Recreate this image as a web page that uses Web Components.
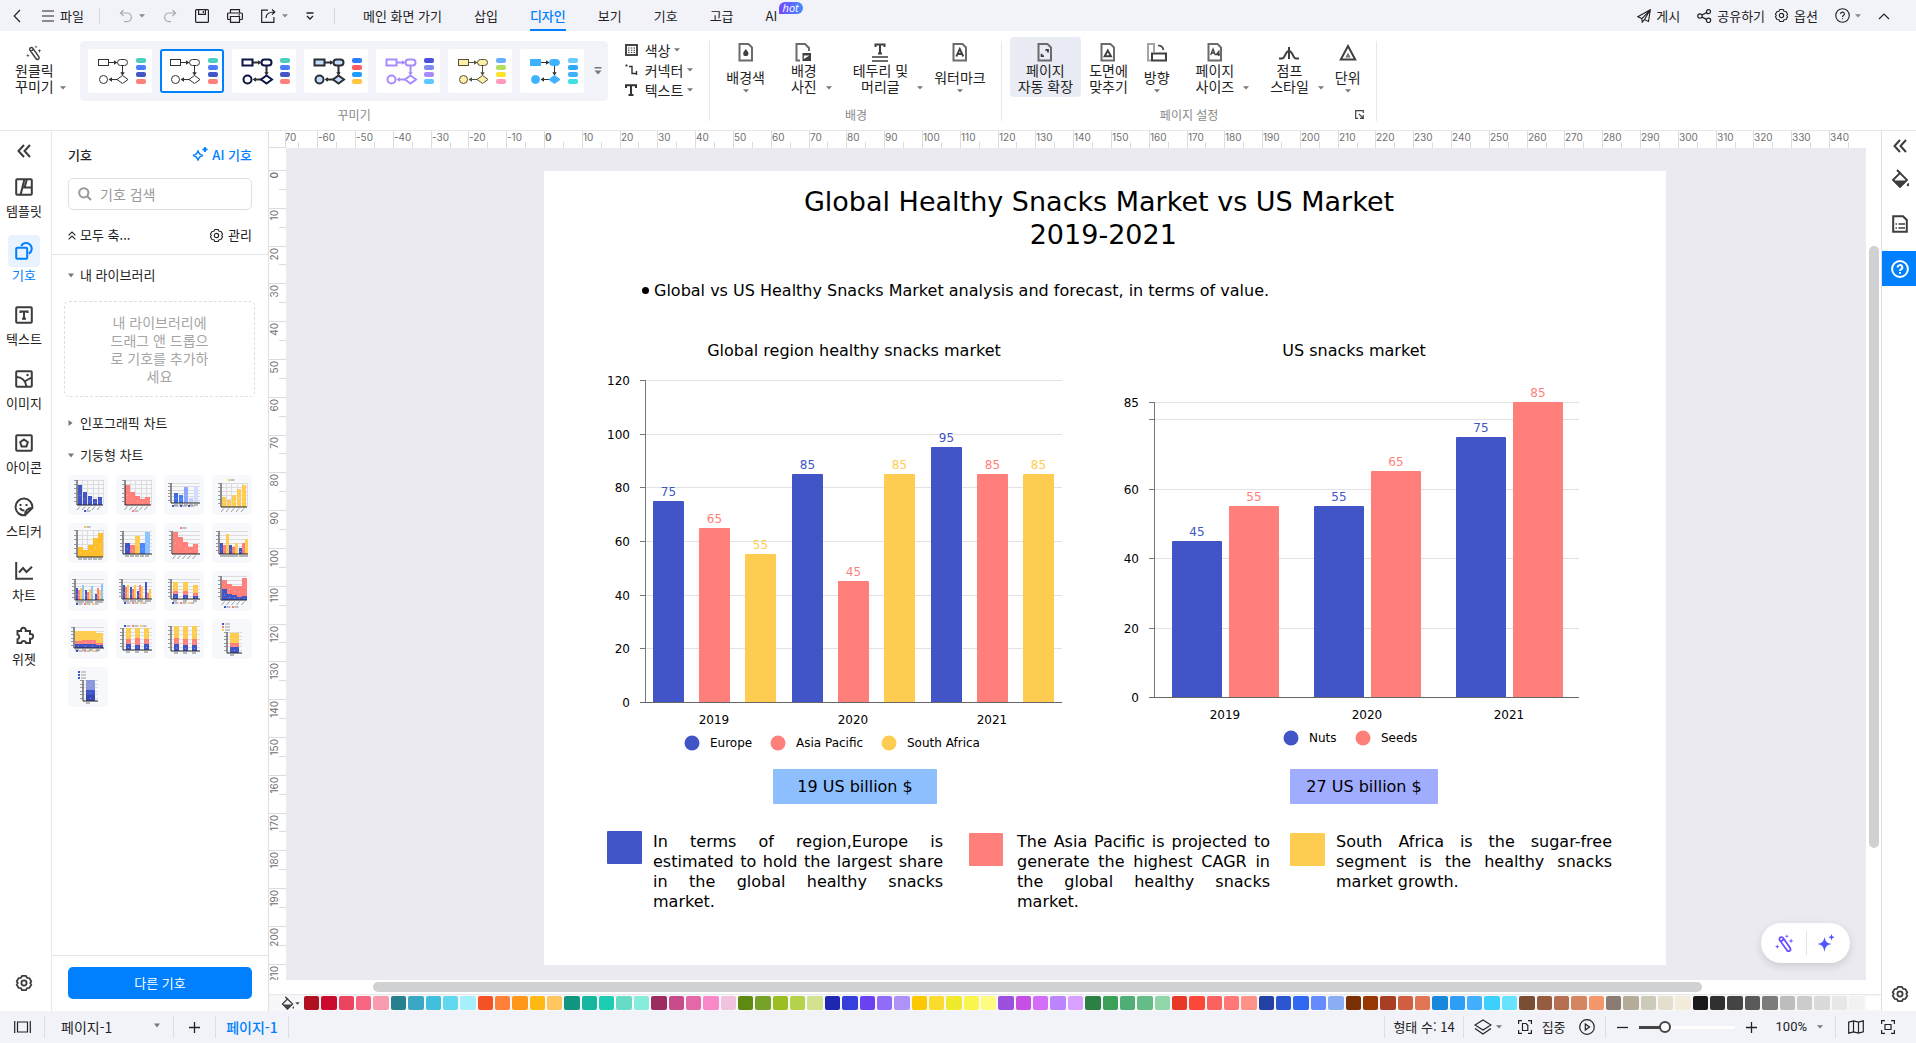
<!DOCTYPE html>
<html lang="ko">
<head>
<meta charset="utf-8">
<title>페이지-1</title>
<style>
  html, body { margin: 0; height: 100%; }
  body { font: 13px/16px "Noto Sans CJK KR", "Noto Sans", sans-serif; color: #222; background: #fff; overflow: hidden; }
</style>
</head>
<body>
<diagram-app></diagram-app>
<script>
const BLUE = '#4155c6', RED = '#ff7f7a', GOLD = '#ffcc52';

/* Registers an element whose shadow root is filled from a template. */
function define(name, css, html, setup) {
  const tpl = document.createElement('template');
  tpl.innerHTML = `<style>
    *{box-sizing:border-box}
    button,input,select{font:inherit;color:inherit;background:none;border:0;margin:0;padding:0}
    svg{display:block}
    ${css}</style>${html}`;
  customElements.define(name, class extends HTMLElement {
    connectedCallback() {
      if (this.shadowRoot) return;
      this.attachShadow({ mode: 'open' }).append(tpl.content.cloneNode(true));
      if (setup) setup(this, this.shadowRoot);
    }
  });
}

const GEAR = '<path d="M6.2 1.6h3.6l.9 1.9 2.1.2 1.7 3-1 1.3 1 1.3-1.7 3-2.1.2-.9 1.9H6.200l-.9-1.900-2.100-.2-1.700-3 1-1.300-1-1.300 1.700-3 2.100-.2z" stroke-linejoin="round"/><circle cx="8" cy="8" r="2.300"/>';
const WAND = '<path d="M4.300 2.900a1.800 1.800 0 0 1 2.600.5l6 8.500a1.700 1.700 0 0 1-2.700 2l-6-8.400a1.800 1.800 0 0 1 .1-2.600zM4.500 6.500l3-2.100"/><path d="M10 .2l.4 1.300 1.300.4-1.300.4-.4 1.300-.4-1.300-1.300-.4 1.300-.4zM13.500 3.700l.5 1.600 1.600.5-1.600.5-.5 1.600-.5-1.600-1.600-.5 1.600-.5zM1.900 8.600l.5 1.600 1.500.4-1.500.5-.5 1.500-.5-1.500-1.400-.5 1.400-.4z" fill="currentColor" stroke="none"/>';
const DOC = '<path d="M1.500 1h9l3.500 3.500V17.500h-12.500z" stroke="#6b6b6b" stroke-width="2"/>';

/* name: [view width, view height, stroke width, markup] */
const ICONS = {
  back: [8, 14, 1.200, '<path d="M7 1L1.200 7 7 13"/>'],
  menu: [12, 12, 1.200, '<path d="M0 1h12M0 6h12M0 11h12"/>'],
  undo: [14, 14, 1.200, '<path d="M4.500 1L1.500 4l3 3M1.500 4H8a4.300 4.300 0 0 1 0 8.600H5"/>'],
  redo: [14, 14, 1.200, '<path d="M9.500 1l3 3-3 3M12.500 4H6a4.300 4.300 0 0 0 0 8.600h2"/>'],
  save: [14, 14, 1.200, '<rect x=".6" y=".6" width="12.800" height="12.800" rx="1"/><path d="M3.600.6v4.800h6.800V.6M8.300 2v2"/>'],
  print: [16, 14, 1.200, '<path d="M3.500 4V.6h9V4M3.500 10.500h-2A.9.9 0 0 1 .6 9.600V5a1 1 0 0 1 1-1h12.800a1 1 0 0 1 1 1v4.600a.9.9 0 0 1-.9.900h-2M3.500 7.500h9v5.900h-9zM11.500 5.800h1.500"/>'],
  export: [15, 14, 1.200, '<path d="M7 1.200H.7v12.200h12.200V8M5 9c0-4 3-6 8.500-6M11 .5L13.800 3 11 5.600"/>'],
  more: [8, 8, 1.300, '<path d="M.5 1h7M1 4l3 3 3-3"/>'],
  up: [12, 8, 1.200, '<path d="M1 7l5-5 5 5"/>'],
  caret: [6, 4, 0, '<path d="M0 .2h6L3 3.600z" fill="currentColor"/>'],
  down: [6, 5, 0, '<path d="M0 .5h6L3 4.500z" fill="currentColor"/>'],
  right: [5, 6, 0, '<path d="M.5 0v6L4.500 3z" fill="currentColor"/>'],
  bars: [8, 8, 0, '<path d="M.5 0h7v1.500h-7zM.5 3.500h7L4 7.500z" fill="currentColor"/>'],
  send: [14, 14, 1.100, '<path d="M13.300.8L.8 7.800l4.100 1.800L13.300.8l-1.800 11.700-4.100-1.900-2.200 2.600-.3-3.600M7.400 10.600L13.300.8"/>'],
  share: [15, 14, 1.200, '<circle cx="3" cy="7" r="2.200"/><circle cx="11.500" cy="2.700" r="2"/><circle cx="11.500" cy="11.300" r="2.200"/><path d="M5 6l4.500-2.400M5 8.100l4.500 2.300"/>'],
  gear: [16, 16, 1.200, GEAR],
  gearBold: [16, 16, 1.600, GEAR],
  help: [16, 16, 1.200, '<circle cx="8" cy="8" r="7.200"/><path d="M6 6.400a2 2 0 1 1 3 1.700c-.7.4-1 .8-1 1.500M8 10.900v1.200"/>'],
  helpBold: [18, 18, 2, '<circle cx="9" cy="9" r="7.900"/><path d="M6.700 7.400a2.300 2.300 0 1 1 3.400 2c-.8.4-1.100.8-1.100 1.500M9 12v1.800"/>'],
  wand: [16, 16, 1.500, WAND],
  color: [13, 12, 1.800, '<rect x="1" y="1" width="11" height="10"/><path d="M3 4h1.500M5.800 4h1.500M8.500 4H10M3 6.200h1.500M5.800 6.200h1.500M8.500 6.200H10M3 8.400h1.500M5.800 8.400h1.500M8.500 8.400H10" stroke-width="1"/>'],
  connector: [13, 12, 1.400, '<path d="M1.500.5v2M.5 1.500h2M4 2.500h3v7h4M11.500 7v4" />'],
  textT: [12, 12, 2, '<path d="M1 4V1.200h10V4M6 1.500v9.500M3.500 11h5"/>'],
  bgColor: [16, 19, 2, DOC + '<path d="M7.800 6c1.700 2 2.600 3.300 2.600 4.500a2.600 2.600 0 0 1-5.200 0C5.200 9.300 6.100 8 7.800 6z" fill="currentColor" stroke="none"/>'],
  bgPhoto: [17, 19, 2, '<path d="M5 17.500H1.500V1H10l4 4v3" stroke="#6b6b6b"/><path d="M7.500 10h8.500v8H7.500z" fill="currentColor" stroke="none"/><path d="M9 16l5.500-3.500V16z" fill="#fff" stroke="none" transform="rotate(180 11.700 14.200)"/>'],
  header: [16, 19, 2, '<path d="M3.500 4V1.500h9V4M8 1.500v9M6 10.500h4"/><path d="M0 14h16M0 18h16" stroke="#6b6b6b" stroke-width="1.800"/>'],
  watermark: [16, 19, 1.800, DOC + '<path d="M4.300 13.500L7.800 6l3.500 7.500M5.600 11h4.500"/>'],
  autoExpand: [16, 19, 1.800, DOC + '<path d="M8.500 7H11v2.500M7 13.200H4.600v-2.500"/>'],
  fit: [16, 19, 1.900, DOC + '<path d="M7.800 7.500l3.200 5.700H4.600z"/>'],
  orient: [20, 19, 2, '<path d="M4 17.500H1V1h6v8" stroke="#a5a5a5"/><path d="M5 10.500h14v7H5z"/><path d="M11 2.500c3 0 5 1.500 5.500 4.500" stroke-width="1.700"/>'],
  size: [16, 19, 1.300, DOC + '<path d="M3.700 12l2.300-6 2.300 6M4.500 10h3M11.800 13V8.300L9.300 11.500h3.600"/>'],
  jump: [20, 14, 2, '<path d="M0 12.500h3c3.500 0 3-7.500 7-7.500s3.500 7.500 7 7.500h3M10 1v12"/>'],
  unit: [18, 17, 2, '<path d="M9 2l7.200 13.500H1.800z"/><path d="M9 8.500l2.700 5H6.300z" fill="#777" stroke="none"/>'],
  corner: [9, 9, 1.200, '<path d="M3 8.300H.7V.7h7.600V3M3.800 3.800L8 8M8.300 5v3.300H5"/>'],
  collapse: [14, 14, 2, '<path d="M7 1L1.500 7 7 13M13 1L7.500 7l5.500 6"/>'],
  template: [18, 18, 2, '<rect x="1.200" y="1.200" width="15.600" height="15.600" rx="1"/><path d="M9.500 1L5.500 17M8 9.500h9M12 1L9.600 9.500"/>'],
  symbols: [18, 18, 2, '<rect x="1.200" y="5.800" width="11" height="11" rx="1"/><path d="M6.200 4a5.600 5.600 0 1 1 7.500 7.600"/>'],
  textBox: [18, 18, 2, '<rect x="1.200" y="1.200" width="15.600" height="15.600" rx="1"/><path d="M5.500 7V5.500h7V7M9 5.500v7.500M7 12.800h4"/>'],
  image: [18, 18, 2, '<rect x="1.200" y="1.200" width="15.600" height="15.600" rx="1"/><path d="M1.500 7c5 0 9 3.500 10 9.500M9.500 11.500l7-4"/><circle cx="12.500" cy="5" r="1.200" fill="currentColor" stroke="none"/>'],
  iconBox: [18, 18, 2, '<rect x="1.200" y="1.200" width="15.600" height="15.600" rx="1"/><path d="M9 5.500l3.800 2.700-1.400 4.300H6.600L5.200 8.200z"/>'],
  sticker: [20, 20, 2, '<path d="M11 18.300A8.400 8.400 0 1 1 18.300 11c-4.500 0-7.300 2.500-7.300 7.300zM18.300 11L11 18.300M6 11c1 2 2.500 2.600 4.500 2.500"/><path d="M6.500 7v2M12.500 7v2"/>'],
  chart: [18, 18, 2, '<path d="M1.200 0v16.800H18M4 10.500L8 6l3.500 4L17 4.800"/>'],
  widget: [20, 18, 2, '<path d="M3.500 5H7a2.500 2.500 0 1 1 4.800 0H16v3a2.500 2.500 0 1 1 0 4.800V17h-4a2.400 2.400 0 0 0-4.700 0H3.500v-3.700a2.500 2.500 0 0 0 0-4.800z"/>'],
  spark: [16, 16, 1.300, '<path d="M6 3.500c.7 3.300 1.700 4.300 5 5-3.300.7-4.300 1.700-5 5-.7-3.300-1.700-4.300-5-5 3.300-.7 4.300-1.700 5-5z"/><path d="M13 0v5M10.500 2.500h5" stroke-width="1.800"/>'],
  sparkFill: [18, 18, 0, '<path d="M7.500 3c1 4.700 2.300 6 7 7-4.700 1-6 2.300-7 8-1-5.700-2.300-7-7-8 4.700-1 6-2.300 7-7zM14.500 0l.9 2.300 2.300.9-2.300.9-.9 2.300-.9-2.300-2.300-.9 2.300-.9z" fill="currentColor"/>'],
  search: [14, 14, 2, '<circle cx="5.800" cy="5.800" r="4.600"/><path d="M9.200 9.200L13 13"/>'],
  foldAll: [8, 9, 1.100, '<path d="M.6 4.300L4 1l3.400 3.300M.6 8.300L4 5l3.400 3.300"/>'],
  bucket: [18, 19, 2, '<path d="M2 11l7-7 7 7-7 7z" stroke-width="1.800"/><path d="M2 11.500h14l-7 7zM17 14a1.600 1.600 0 1 1-1.400 2.300z" fill="currentColor" stroke="none"/><path d="M6 1l3.500 3.500"/>'],
  notes: [16, 18, 2, '<path d="M1.200 1.200h9.800l3.800 3.800v11.800H1.200z"/><path d="M6.500 9H13M6.500 13H13M3.500 9H5M3.500 13H5" stroke-width="1.500"/>'],
  pages: [17, 12, 1.200, '<path d="M.7 0v12M16.300 0v12M3.500 1h10v10h-10z"/>'],
  plus: [11, 11, 1.300, '<path d="M5.500 0v11M0 5.500h11"/>'],
  minus: [11, 11, 1.300, '<path d="M0 5.500h11"/>'],
  layers: [18, 16, 1.200, '<path d="M9 1l8 5-8 5-8-5zM1 9.500l8 5.500 8-5.500"/>'],
  focus: [14, 14, 1.200, '<path d="M.6 4V.6H4M10 .6h3.400V4M13.400 10v3.400H10M4 13.400H.6V10M4.500 3.500H8L9.800 5.300v5.200H4.500z"/>'],
  play: [16, 16, 1.200, '<circle cx="8" cy="8" r="7.300"/><path d="M6.300 5l4.200 3-4.200 3z"/>'],
  map: [16, 14, 1.200, '<path d="M.7 2.200L5.500.8l5 1.400 4.800-1.400v11L10.500 13.200l-5-1.400-4.800 1.400zM5.500.8v11M10.500 2.200v11"/>'],
  fitView: [14, 14, 1.200, '<path d="M.6 4V.6H4M10 .6h3.400V4M13.400 10v3.400H10M4 13.400H.6V10M4 4.500h6v5H4z"/>']
};

define('ui-icon', ':host{display:inline-flex;flex:none}', '', (el, root) => {
  const [w, h, s, body] = ICONS[el.getAttribute('name')];
  const size = +el.getAttribute('width') || w;
  root.innerHTML += `<svg width="${size}" height="${Math.round(h * size / w)}" viewBox="0 0 ${w} ${h}" fill="none" stroke="currentColor" stroke-width="${s}" aria-hidden="true">${body}</svg>`;
});

/* ---------- top bar ---------- */
define('top-bar', `
  :host{display:flex;align-items:center;justify-content:space-between;height:31px;background:#f2f3f9;color:#222}
  div,nav{display:flex;align-items:center}
  button{display:flex;align-items:center;gap:5px;height:30px;white-space:nowrap}
  .left{padding-left:13px}
  .file{margin-left:21px;gap:6px}
  .tools{margin:0 20px 0 15px;padding:0 20px 0 19px;height:16px;border:solid #d6d7dc;border-width:0 1px;gap:18px}
  .tools button{gap:6px}
  .off{color:#a9a9ae}
  ui-icon[name=caret]{color:#888}
  nav{gap:32px;padding-left:8px}
  nav button{position:relative}
  nav button[aria-current]{color:#0080ff;font-weight:500}
  nav button[aria-current]::after{content:"";position:absolute;left:0;right:0;bottom:0;height:2px;background:#0080ff}
  .hot{position:absolute;left:13px;top:1px;padding:0 4px;border-radius:7px 7px 7px 0;background:linear-gradient(90deg,#7a45ff,#3f8cff);color:#fff;font:italic 11px/12px "Open Sans",sans-serif}
  .right{gap:9px;padding-right:26px}
  .right .wide{margin-left:8px}`,
`<div class="left">
  <button aria-label="뒤로"><ui-icon name="back"></ui-icon></button>
  <button class="file"><ui-icon name="menu"></ui-icon>파일</button>
  <div class="tools">
    <button class="off" aria-label="실행 취소"><ui-icon name="undo"></ui-icon><ui-icon name="caret"></ui-icon></button>
    <button class="off" aria-label="다시 실행"><ui-icon name="redo"></ui-icon></button>
    <button aria-label="저장"><ui-icon name="save"></ui-icon></button>
    <button aria-label="인쇄"><ui-icon name="print"></ui-icon></button>
    <button aria-label="내보내기"><ui-icon name="export"></ui-icon><ui-icon name="caret"></ui-icon></button>
    <button aria-label="더 보기"><ui-icon name="more"></ui-icon></button>
  </div>
  <nav><button>메인 화면 가기</button><button>삽입</button><button aria-current="page">디자인</button><button>보기</button><button>기호</button><button>고급</button><button>AI<span class="hot">hot</span></button></nav>
</div>
<div class="right">
  <button><ui-icon name="send"></ui-icon>게시</button>
  <button class="wide"><ui-icon name="share"></ui-icon>공유하기</button>
  <button><ui-icon name="gear" width="15"></ui-icon>옵션</button>
  <button class="wide" aria-label="도움말"><ui-icon name="help" width="15"></ui-icon><ui-icon name="caret"></ui-icon></button>
  <button class="wide" aria-label="리본 접기"><ui-icon name="up"></ui-icon></button>
</div>`);

/* ---------- ribbon ---------- */
define('ribbon-button', `
  :host{display:block;--side:8px}
  :host([side]){--side:18px}
  button{display:grid;grid-template-columns:var(--side) auto var(--side);justify-items:center;align-content:start;height:60px;padding-top:6px;border-radius:4px;font-size:14px;line-height:16px;color:#222;white-space:nowrap}
  .icon{grid-column:1/-1;display:grid;place-items:center;height:19px;color:#404040}
  .label{grid-column:2;text-align:center}
  .c{color:#777}
  :host([side]) .c{grid-column:3;align-self:end;justify-self:end;padding:0 3px 4px 0;line-height:0}
  :host([below]) .label{padding-top:7px}
  :host([below]) .c{grid-column:2;line-height:0;padding-top:2px}
  :host([on]) button{background:#eaecf5}`,
`<button><span class="icon"></span><span class="label"><slot></slot></span></button>`, (el, root) => {
  root.querySelector('.icon').innerHTML = `<ui-icon name="${el.getAttribute('icon')}"></ui-icon>`;
  if (el.hasAttribute('side') || el.hasAttribute('below'))
    root.querySelector('button').insertAdjacentHTML('beforeend', '<span class="c"><ui-icon name="caret"></ui-icon></span>');
});

define('theme-thumb', `
  :host{display:block}
  button{display:block;width:64px;height:44px;background:#fff;border-radius:3px}
  :host([on]) button{box-shadow:inset 0 0 0 2px #0080ff}`,
`<button></button>`, (el, root) => {
  const [line, fill, w, ...chips] = el.getAttribute('colors').split(' ');
  const arrow = el.getAttribute('arrow') || line;
  root.querySelector('button').setAttribute('aria-label', '테마');
  root.querySelector('button').innerHTML = `<svg width="64" height="44" viewBox="0 0 64 44">
    <g stroke="${arrow}" fill="${arrow}" stroke-width="${w}">
      <path d="M21 13.500h7M34.500 17v8M29 30.500h-7"/>
      <path stroke="none" d="M26 11.300l3.500 2.200-3.500 2.200zM32.300 23.300l2.200 3.500 2.200-3.500zM24 28.300l-3.500 2.200 3.500 2.200z"/></g>
    <g stroke="${line}" fill="${fill}" stroke-width="${w}"><rect x="10.500" y="10.500" width="10" height="6"/><rect x="29.500" y="10.500" width="10" height="6" rx="3"/><circle cx="15.500" cy="30.500" r="4"/><path d="M34.500 26.500l5.500 4-5.500 4-5.500-4z"/></g>
    ${chips.map((c, i) => `<rect x="48" y="${9 + i * 7}" width="10" height="5" rx="2" fill="${c}"/>`).join('')}</svg>`;
});

define('tool-ribbon', `
  :host{display:flex;height:100px;border-bottom:1px solid #e8e8ea;background:#fff}
  section{display:grid;grid-template-rows:60px 1fr;padding:6px 8px 0;position:relative}
  section::after{content:"";position:absolute;right:0;top:10px;bottom:9px;width:1px;background:#e8e8ea}
  .row{display:flex}
  .first{padding-left:0}
  h2{margin:0;font-size:12px;line-height:16px;font-weight:400;color:#888;text-align:center;padding-top:10px}
  .first h2{padding-left:6px}
  .gallery{display:flex;align-items:center;gap:8px;height:60px;margin:4px 0 0 11px;padding:0 6px 0 8px;background:#f2f3f9;border-radius:5px;color:#777}
  .gallery ui-icon{margin-left:2px}
  .menus{display:grid;grid-auto-rows:20px;margin:3px 9px 0 17px}
  .menus button{display:grid;grid-template-columns:20px auto auto;justify-content:start;align-items:center;font-size:14px;white-space:nowrap;height:20px;color:#222}
  .menus ui-icon{color:#333}
  .menus ui-icon[name=caret]{color:#777;margin-left:4px}
  .set h2{position:relative}
  .set h2 button{position:absolute;display:flex;right:5px;top:13px;color:#444}`,
`<section class="first"><div class="row">
  <ribbon-button side icon="wand" style="--side:15px">원클릭<br>꾸미기</ribbon-button>
  <div class="gallery">
    <theme-thumb colors="#333 #fff 1 #4bcfc0 #4a7dff #4155c6 #ff7f7a"></theme-thumb>
    <theme-thumb on colors="#333 #fff 1 #4bcfc0 #4a7dff #4155c6 #ff7f7a"></theme-thumb>
    <theme-thumb colors="#0c1445 #fff 2 #4bcfc0 #4a7dff #4155c6 #ff7f7a" arrow="#333"></theme-thumb>
    <theme-thumb colors="#2b2d31 #c4dcff 2 #2f7dff #ff5a5f #1e9dff #ffc53d"></theme-thumb>
    <theme-thumb colors="#a78bff #fff 2 #4a52dc #7f8cf5 #a58bff #5bc8ff"></theme-thumb>
    <theme-thumb colors="#55503c #fff0a8 1 #6aaeff #b2e05c #ffe12e #ff9cbc"></theme-thumb>
    <theme-thumb colors="#3db2ff #3db2ff 1 #69ccff #2aa8ff #3db2ff #3fe0e0" arrow="#333"></theme-thumb>
    <ui-icon name="bars"></ui-icon>
  </div>
  <div class="menus">
    <button><ui-icon name="color"></ui-icon>색상<ui-icon name="caret"></ui-icon></button>
    <button><ui-icon name="connector"></ui-icon>커넥터<ui-icon name="caret"></ui-icon></button>
    <button><ui-icon name="textT"></ui-icon>텍스트<ui-icon name="caret"></ui-icon></button>
  </div></div><h2>꾸미기</h2></section>
<section><div class="row">
  <ribbon-button below icon="bgColor">배경색</ribbon-button>
  <ribbon-button side icon="bgPhoto">배경<br>사진</ribbon-button>
  <ribbon-button side icon="header">테두리 및<br>머리글</ribbon-button>
  <ribbon-button below icon="watermark">워터마크</ribbon-button></div><h2>배경</h2></section>
<section class="set"><div class="row">
  <ribbon-button on icon="autoExpand">페이지<br>자동 확장</ribbon-button>
  <ribbon-button icon="fit">도면에<br>맞추기</ribbon-button>
  <ribbon-button below icon="orient">방향</ribbon-button>
  <ribbon-button side icon="size">페이지<br>사이즈</ribbon-button>
  <ribbon-button side icon="jump">점프<br>스타일</ribbon-button>
  <ribbon-button below icon="unit">단위</ribbon-button></div>
  <h2>페이지 설정<button aria-label="페이지 설정 열기"><ui-icon name="corner"></ui-icon></button></h2></section>`);

/* ---------- side navigation ---------- */
define('nav-item', `
  :host{display:block}
  button{display:flex;flex-direction:column;align-items:center;width:48px;height:64px;color:#222;white-space:nowrap}
  span{display:grid;place-items:center;width:32px;height:32px;border-radius:4px;color:#3c3c3c}
  :host([on]) button,:host([on]) span{color:#0080ff}
  :host([on]) span{background:#e8f3ff}`,
`<button><span></span><slot></slot></button>`, (el, root) => {
  root.querySelector('span').innerHTML = `<ui-icon name="${el.getAttribute('icon')}"></ui-icon>`;
});

define('side-nav', `
  :host{display:flex;flex-direction:column;justify-content:space-between;width:52px;border-right:1px solid #e8e8ea;color:#3c3c3c}
  .icon{display:grid;place-items:center;width:48px;height:40px}
  .end{height:56px}`,
`<div><button class="icon" aria-label="접기"><ui-icon name="collapse"></ui-icon></button>
<nav><nav-item icon="template">템플릿</nav-item><nav-item on icon="symbols">기호</nav-item><nav-item icon="textBox">텍스트</nav-item><nav-item icon="image">이미지</nav-item><nav-item icon="iconBox">아이콘</nav-item><nav-item icon="sticker">스티커</nav-item><nav-item icon="chart">차트</nav-item><nav-item icon="widget">위젯</nav-item></nav></div>
<button class="icon end" aria-label="설정"><ui-icon name="gearBold" width="18"></ui-icon></button>`);

define('right-nav', `
  :host{display:flex;flex-direction:column;justify-content:space-between;width:35px;border-left:1px solid #e0e0e3;color:#3c3c3c}
  button{display:grid;place-items:center;width:34px;height:35px;padding-left:2px}
  .first{height:30px}
  .tall{height:55px}
  .on{background:#0080ff;color:#fff}`,
`<div><button class="first" aria-label="펼치기"><ui-icon name="collapse"></ui-icon></button><button aria-label="채우기"><ui-icon name="bucket"></ui-icon></button><button class="tall" aria-label="문서"><ui-icon name="notes"></ui-icon></button><button class="on" aria-label="도움말"><ui-icon name="helpBold"></ui-icon></button></div>
<button aria-label="설정"><ui-icon name="gearBold" width="18"></ui-icon></button>`);

/* ---------- symbol panel ---------- */
/* A run of bars: first x, bar width, step, heights, colour (or a colour per bar). */
const run = (x, w, step, hs, c) => hs.map((h, i) => [x + i * step, w, [h, Array.isArray(c) ? c[i] : c]]);
const stack = (x, w, step, list, cs) => list.map((hs, i) => [x + i * step, w, ...hs.map((h, k) => [h, cs[k]])]);
const BRY = [BLUE, RED, GOLD];
const SYMBOLS = [
  { box: [9, 5, 26, 25], v: 5, bars: run(10, 4, 5, [20, 13, 9, 6, 8], BLUE), diag: 1, legend: [36, BLUE] },
  { box: [9, 5, 26, 25], v: 5, bars: run(9, 5, 5, [20, 13, 9, 6, 8], RED), diag: 1, legend: [36, RED] },
  { box: [7, 8, 29, 20], bars: run(10, 4, 5, [10, 8, 16, 5, 17], ['#4169e1', '#3f7cff', '#8fa6ff', '#c2ccff', '#d3dbff']), legend: [31, BLUE, BLUE, BLUE] },
  { box: [9, 8, 26, 24], v: 5, bars: run(10, 4, 5, [10, 7, 12, 18, 22], GOLD), diag: 1, legend: [5, GOLD] },
  { box: [9, 7, 26, 27], v: 5, bars: run(10, 5, 5, [10, 7, 12, 19, 24], '#ffbf2b'), legend: [4, GOLD] },
  { box: [7, 8, 29, 23], bars: run(9, 5, 5, [11, 9, 18, 11, 22], [BLUE, RED, GOLD, '#4a86ff', '#8dc4ff']) },
  { box: [8, 8, 28, 23], bars: run(9, 5, 5, [22, 17, 12, 7, 10], RED), diag: 1, legend: [5, RED] },
  { box: [7, 8, 29, 23], bars: [...run(8, 3, 3, [11, 9, 20], BRY), ...run(17, 3, 3, [9, 7, 11], BRY), ...run(27, 3, 3, [6, 11, 15], BRY)] },
  { box: [7, 8, 29, 21], bars: [...run(8, 2, 2, [12, 10, 12, 15], [...BRY, '#8dc4ff']), ...run(17, 2, 2, [10, 8, 11, 14], [...BRY, '#8dc4ff']), ...run(27, 2, 2, [6, 12, 10, 16], [...BRY, '#8dc4ff'])], legend: [33, BLUE, RED, GOLD] },
  { box: [6, 8, 30, 20], bars: [...run(7, 2, 2, [14, 12, 14], BRY), ...run(14, 2, 2, [12, 10, 14], BRY), ...run(21, 2, 2, [8, 14, 12], BRY), ...run(29, 2, 2, [17, 6, 10], BRY)], legend: [32, BLUE, RED, GOLD] },
  { box: [7, 8, 29, 20], bars: stack(9, 5, 10, [[5, 3, 9], [4, 4, 9], [3, 3, 8]], BRY), legend: [32, BLUE, RED, GOLD] },
  { box: [9, 5, 26, 24], bars: stack(10, 5, 5, [[11, 9], [6, 10], [5, 9], [3, 11], [4, 18]], [BLUE, RED]), diag: 1, legend: [36, BLUE, RED] },
  { box: [6, 8, 30, 21], bars: stack(7, 7, 7, [[4, 3, 10], [4, 4, 9], [4, 4, 9], [3, 2, 10]], BRY), legend: [32, BLUE, RED, GOLD] },
  { box: [7, 9, 29, 22], bars: stack(10, 5, 9, [[6, 5, 11], [5, 7, 10], [6, 5, 11]], BRY), legend: [7, BLUE, RED, GOLD] },
  { box: [7, 7, 29, 25], bars: stack(10, 5, 9, [[7, 6, 12], [6, 6, 13], [6, 6, 13]], BRY) },
  { box: [15, 13, 15, 21], bars: stack(18, 9, 9, [[6, 4, 10]], BRY), side: BRY },
  { box: [15, 13, 15, 21], bars: stack(18, 9, 9, [[6, 5, 10]], ['#3648b0', BLUE, '#8b97dd']), side: [BLUE, BLUE, BLUE] }
];

define('symbol-thumb', `:host{display:block}button{display:block;width:40px;height:40px;background:#f7f8fc;border-radius:4px}`,
`<button aria-label="차트 기호"></button>`, (el, root) => {
  const s = SYMBOLS[+el.getAttribute('index')], [x, y, w, h] = s.box, b = y + h;
  let g = '';
  for (let i = 0; i < 6; i++) {
    const gy = y + Math.round(i * h / 6);
    g += `<path d="M${x} ${gy + .5}h${w}" stroke="#dcdcdc"/><path d="M${x - 3} ${gy + .5}h2" stroke="#999"/>`;
  }
  if (s.v) for (let i = 1; i <= s.v; i++) g += `<path d="M${x + Math.round(i * w / s.v)}.500 ${y}v${h}" stroke="#dcdcdc"/>`;
  for (const [bx, bw, ...segs] of s.bars) {
    let top = b;
    for (const [sh, c] of segs) { top -= sh; g += `<rect x="${bx}" y="${top}" width="${bw}" height="${sh}" fill="${c}"/><rect x="${bx + bw / 2 - .5}" y="${top + sh / 2}" width="1" height="1" fill="#fff" opacity=".4"/>`; }
    g += s.diag ? `<path d="M${bx + bw / 2} ${b + 1.500}l-3 3.500" stroke="#999"/>` : `<path d="M${bx} ${b + 2}h${Math.min(bw, 4)}" stroke="#777"/>`;
  }
  g += `<path d="M${x} ${y}v${h}h${w}" stroke="#222" fill="none"/>`;
  if (s.legend) s.legend.slice(1).forEach((c, i, a) => { const lx = 20 - a.length * 4 + i * 8; g += `<rect x="${lx}" y="${s.legend[0] - 1}" width="2" height="2" fill="${c}"/><path d="M${lx + 2.500} ${s.legend[0]}h4" stroke="#888"/>`; });
  if (s.side) s.side.forEach((c, i) => { g += `<rect x="10" y="${4 + i * 3}" width="2" height="2" fill="${c}"/><path d="M13 ${5 + i * 3}h5" stroke="#999"/>`; });
  root.querySelector('button').innerHTML = `<svg width="40" height="40" viewBox="0 0 40 40">${g}</svg>`;
});

define('symbol-panel', `
  :host{display:flex;flex-direction:column;width:217px;border-right:1px solid #e0e0e3;color:#222}
  header{padding:15px 16px 10px;border-bottom:1px solid #e4e4e7}
  .line{display:flex;justify-content:space-between;align-items:center;height:18px}
  .line button{display:flex;align-items:center;gap:4px}
  h1{margin:0;font-size:13px;font-weight:500}
  .ai{color:#0080ff;font-weight:500}
  .search{display:flex;align-items:center;gap:8px;height:32px;margin:14px 0 16px;padding:0 9px;border:1px solid #e0e0e4;border-radius:5px;color:#999}
  input{width:100%;min-width:0;font-size:14px;outline:0}
  input::placeholder{color:#999;opacity:1}
  .body{flex:1;overflow:hidden;padding:12px 16px}
  .fold{display:flex;align-items:center;gap:5px;height:16px}
  .fold ui-icon{width:7px;color:#777}
  .drop{margin:18px -3px 18px -4px;height:96px;border:1px dashed #dedee2;border-radius:5px;display:grid;place-content:center;text-align:center;font-size:14px;line-height:18px;color:#a5a5a5}
  .grid{display:grid;grid-template-columns:repeat(auto-fill,40px);gap:8px;margin-top:12px}
  .next{margin-top:16px}
  footer{padding:11px 16px 12px;border-top:1px solid #e4e4e7}
  footer button{width:100%;height:32px;border-radius:5px;background:#0080ff;color:#fff}`,
`<header>
  <div class="line"><h1>기호</h1><button class="ai"><ui-icon name="spark"></ui-icon>AI 기호</button></div>
  <label class="search"><ui-icon name="search"></ui-icon><input type="search" aria-label="기호 검색" placeholder="기호 검색"></label>
  <div class="line"><button><ui-icon name="foldAll"></ui-icon>모두 축...</button><button><ui-icon name="gear" width="15"></ui-icon>관리</button></div>
</header>
<div class="body">
  <button class="fold"><ui-icon name="down"></ui-icon>내 라이브러리</button>
  <div class="drop"><span>내 라이브러리에<br>드래그 앤 드롭으<br>로 기호를 추가하<br>세요</span></div>
  <button class="fold"><ui-icon name="right"></ui-icon>인포그래픽 차트</button>
  <button class="fold next"><ui-icon name="down"></ui-icon>기둥형 차트</button>
  <div class="grid"></div>
</div>
<footer><button>다른 기호</button></footer>`, (el, root) => {
  root.querySelector('.grid').innerHTML = SYMBOLS.map((s, i) => `<symbol-thumb index="${i}"></symbol-thumb>`).join('');
});

/* ---------- rulers ---------- */
define('page-ruler', ':host{display:block;overflow:hidden;min-width:0;min-height:0;position:relative;contain:size}svg{font:10px Inter,sans-serif;fill:#707070}path{stroke:#dcdce0}', '<div></div>', (el, root) => {
  const vertical = el.hasAttribute('vertical'), origin = +el.getAttribute('origin'), mm = 96 / 25.4;
  const holder = root.querySelector('div');
  const draw = () => {
    const length = vertical ? el.clientHeight : el.clientWidth;
    let g = '';
    for (let n = -80; ; n += 10) {
      const p = Math.round(origin + n * mm), q = Math.round(origin + (n + 5) * mm);
      if (p < -8) continue;
      if (p > length - 8) break;
      const weight = n === 0 ? ' font-weight="600"' : '';
      g += vertical
        ? `<path d="M0 ${p}.500h17M10 ${q}.500h7"/><text text-anchor="end" transform="translate(9 ${p + 2}) rotate(-90)"${weight}>${n}</text>`
        : `<path d="M${p}.500 0v17M${q}.500 11v6"/><text x="${p + 1}" y="10"${weight}>${n}</text>`;
    }
    holder.innerHTML = `<svg width="${vertical ? 17 : length}" height="${vertical ? length : 17}">${g}</svg>`;
  };
  new ResizeObserver(draw).observe(el);
});

/* ---------- drawing ---------- */
define('bar-chart', ':host{display:block}svg{overflow:visible;font:12px "DejaVu Sans",sans-serif}', '', (el, root) => {
  const c = JSON.parse(el.textContent);
  const y = v => Math.round(c.height - v * c.height / c.max);
  let g = '';
  for (const t of c.ticks) g += `<path d="M0 ${y(t)}.500h${c.width}" stroke="#e2e2e2"/><path d="M-5 ${y(t)}.500h5" stroke="#777"/>`;
  for (const t of c.ticks) if (!c.unlabelled.includes(t)) g += `<text x="-15" y="${y(t) + 5}" text-anchor="end">${t}</text>`;
  c.series.forEach((s, k) => s.values.forEach((v, i) => {
    const x = c.start + i * c.group + k * c.step;
    g += `<path d="M${x} ${c.height}V${y(v) + 1}q0-1 1-1h${c.bar - 2}q1 0 1 1V${c.height}z" fill="${s.color}"/><text x="${x + c.bar / 2}" y="${y(v) - 5}" text-anchor="middle" fill="${s.color}">${v}</text>`;
  }));
  c.labels.forEach((l, i) => { g += `<text x="${c.first + i * c.group}" y="${c.height + 22}" text-anchor="middle">${l}</text>`; });
  g += `<path d="M.500 0V${c.height}" stroke="#777" fill="none"/><path d="M-5 ${c.height}.500h${c.width + 5}" stroke="#666"/>`;
  c.series.forEach(s => { g += `<circle cx="${s.legend}" cy="${c.height + 41}" r="7.500" fill="${s.color}"/><text x="${s.legend + 18}" y="${c.height + 45}">${s.name}</text>`; });
  root.innerHTML += `<svg width="${c.width}" height="${c.height}" role="img">${g}</svg>`;
});

/* An object placed freely on the sheet: at="left top width height". */
define('sheet-object', `
  :host{position:absolute;display:block}
  :host([center]){text-align:center}
  :host([justify]){text-align:justify}
  :host([fill]){display:grid;place-items:center;border-radius:1px}`,
'<slot></slot>', el => {
  const [l, t, w, h] = el.getAttribute('at').split(' ');
  Object.assign(el.style, { left: l + 'px', top: t + 'px', width: w + 'px', height: h ? h + 'px' : '', background: el.getAttribute('fill') || '' });
});

define('drawing-sheet', `
  :host{display:block;position:relative;width:1122px;height:794px;background:#fff;font:16px/20px "DejaVu Sans",sans-serif;color:#000}
  h1{margin:0;font-size:27px;line-height:33px;font-weight:400}
  p{margin:0}
  .point{display:flex;gap:5px}
  .point::before{content:"";width:7px;height:7px;margin-top:6px;border-radius:50%;background:#000}
  h2{margin:0;font-size:16px;line-height:20px;font-weight:400}`,
`<sheet-object at="155 14 800" center><h1>Global Healthy Snacks Market vs US Market<br>&nbsp;2019-2021</h1></sheet-object>
<sheet-object at="98 110 680"><p class="point">Global vs US Healthy Snacks Market analysis and forecast, in terms of value.</p></sheet-object>
<sheet-object at="110 170 400" center><h2>Global region healthy snacks market</h2></sheet-object>
<sheet-object at="660 170 300" center><h2>US snacks market</h2></sheet-object>
<sheet-object at="101 209 417 322"><bar-chart>{"width":417,"height":322,"max":120,"ticks":[20,40,60,80,100,120,0],"unlabelled":[],"start":8,"bar":31,"step":46,"group":139,"first":69,"labels":[2019,2020,2021],
 "series":[{"name":"Europe","color":"#4155c6","legend":47,"values":[75,85,95]},{"name":"Asia Pacific","color":"#ff7f7a","legend":133,"values":[65,45,85]},{"name":"South Africa","color":"#ffcc52","legend":244,"values":[55,85,85]}]}</bar-chart></sheet-object>
<sheet-object at="610 231 425 295"><bar-chart>{"width":425,"height":295,"max":85,"ticks":[20,40,60,80,85,0],"unlabelled":[80],"start":18,"bar":50,"step":57,"group":142,"first":71,"labels":[2019,2020,2021],
 "series":[{"name":"Nuts","color":"#4155c6","legend":137,"values":[45,55,75]},{"name":"Seeds","color":"#ff7f7a","legend":209,"values":[55,65,85]}]}</bar-chart></sheet-object>
<sheet-object at="229 598 164 35" fill="#8dbfff">19 US billion $</sheet-object>
<sheet-object at="746 598 148 35" fill="#a0adff">27 US billion $</sheet-object>
<sheet-object at="63 660 35 33" fill="#4155c6"></sheet-object>
<sheet-object at="109 661 290" justify><p>In terms of region,Europe is estimated to hold the largest share in the global healthy snacks market.</p></sheet-object>
<sheet-object at="425 662 34 33" fill="#ff7f7a"></sheet-object>
<sheet-object at="473 661 253" justify><p>The Asia Pacific is projected to generate the highest CAGR in the global healthy snacks market.</p></sheet-object>
<sheet-object at="746 662 35 33" fill="#ffcc52"></sheet-object>
<sheet-object at="792 661 276" justify><p>South Africa is the sugar-free segment is the healthy snacks market growth.</p></sheet-object>`);

define('work-area', `
  :host{display:grid;grid-template:17px 1fr 14px / 17px 1fr 15px;flex:1;min-height:0}
  .corner{border:solid #e0e0e3;border-width:0 1px 1px 0}
  .view{position:relative;overflow:hidden;background:#ebeaf0;padding:23px 0 0 258px}
  .v,.h{display:flex;background:#fff}
  .v{grid-row:1/3;grid-column:3;flex-direction:column;padding:0 2px 0 3px}
  .h{grid-column:1/4;padding:2px 0}
  i{border-radius:5px;background:#d0d1d3}
  .v::before{content:"";flex:115}.v i{flex:602}.v::after{content:"";flex:132}
  .h::before{content:"";flex:104}.h i{flex:1329}.h::after{content:"";flex:179}
  .ai{position:absolute;right:16px;bottom:17px;display:flex;align-items:center;height:40px;padding-right:6px;border-radius:20px;background:#fff;box-shadow:0 3px 8px #0002;color:#6a4dff}
  .ai button{display:grid;place-items:center;width:45px;height:24px;padding-left:2px}
  .ai button+button{width:38px;padding:0;border-left:1px solid #e4e4e7;color:#4f55ff}`,
`<div class="corner"></div><page-ruler origin="258"></page-ruler><div class="v"><i></i></div>
<page-ruler vertical origin="22"></page-ruler>
<div class="view"><drawing-sheet></drawing-sheet><div class="ai"><button aria-label="AI 꾸미기"><ui-icon name="wand" width="19"></ui-icon></button><button aria-label="AI 도우미"><ui-icon name="sparkFill"></ui-icon></button></div></div>
<div class="h"><i></i></div>`);

const SWATCHES = `b01020 cc0a30 ea4460 f66680 fa9caf 27808e 3aa8c2 40c0dc 60d8ee a6effc f45224 ff8038 ff981a ffb814 ffc55e 129682 17b69e 1bceb3 68dac8 86ecdc
9c2b60 c84c8c e468a8 f988c8 f1c2de 5f8a12 76a228 9bbe24 b4d24a d3e28e 1f28b0 3540dc 6b42f2 906cf8 ae92f8 fcc800 fadc2c f0ea2c faf54c fdfc80
9b50de c650e6 d46cfa bc84ff daa0ff 2c8044 3ca058 4fae76 64bc86 90d6a8 e83828 fc4838 fa6260 ff7878 ff9288 2340a4 2a56d0 3068f2 648cff 8aaef4
7a3002 963800 a83e24 d05e40 e07656 1888dc 2c9ef8 42b0ff 3cd0ff 66e4ff 7a4e34 965c40 b47050 d48660 f4986c 8a7c72 b4ac98 cccab8 e4decc f4ecda
1a1a1a 303030 444444 595959 7b7b7b bdbdbd cccccc dadada e7e7e7 f2f2f2 ffffff`.split(/\s+/);

define('color-strip', `
  :host{display:flex;align-items:center;height:17px;border-top:1px solid #e8e8ea;padding-left:12px;background:#f7f7f9}
  .fill{display:flex;align-items:center;gap:1px;margin-right:4px;color:#444}
  .list{flex:1;display:flex;gap:2px}
  .list button{flex:1;min-width:0;height:14px;border-radius:2px}`,
`<button class="fill" aria-label="채우기 색"><ui-icon name="bucket" width="13"></ui-icon><ui-icon name="caret" width="5"></ui-icon></button><div class="list"></div>`, (el, root) => {
  root.querySelector('.list').innerHTML = SWATCHES.map(c => `<button aria-label="#${c}" style="background:#${c}"></button>`).join('');
});

/* ---------- status bar ---------- */
define('status-bar', `
  :host{display:flex;justify-content:space-between;height:32px;background:#f2f3f9;color:#222}
  div{display:flex;align-items:center}
  button{display:flex;align-items:center;justify-content:center;gap:6px;white-space:nowrap}
  .sep{width:1px;height:22px;background:#dcdde3}
  ui-icon[name=caret]{color:#777}
  .list{width:44px;height:32px}
  .pick{position:relative;width:128px;font-size:14px}
  select{appearance:none;width:100%;height:32px;padding-left:16px;outline:0}
  .pick ui-icon{position:absolute;right:13px;top:12px;color:#777;pointer-events:none}
  .add{width:41px;height:32px}
  .tab{width:72px;height:32px;font-size:14px;font-weight:500;color:#0080ff}
  .left{align-items:center}
  .count{padding:0 8px}
  .right{padding-right:21px}
  .view{padding:0 10px}
  .layers{gap:4px}
  .focus{gap:10px;margin:0 13px 0 16px}
  .zoom{padding:0 12px 0 11px;gap:11px}
  input{appearance:none;width:96px;height:12px;background:linear-gradient(#444,#444) 0/25px 3px no-repeat,linear-gradient(#fff,#fff) 0/100% 3px no-repeat;outline:0}
  input::-webkit-slider-thumb{appearance:none;width:12px;height:12px;border:2px solid #444;border-radius:50%;background:#fff}
  .pct{font-family:Roboto,sans-serif;margin-left:8px;gap:10px}
  .end{gap:17px;padding-left:12px}`,
`<div class="left"><button class="list" aria-label="페이지 목록"><ui-icon name="pages"></ui-icon></button><span class="sep"></span>
<label class="pick"><select aria-label="페이지"><option>페이지-1</option></select><ui-icon name="down"></ui-icon></label><span class="sep"></span>
<button class="add" aria-label="페이지 추가"><ui-icon name="plus"></ui-icon></button><span class="sep"></span><button class="tab">페이지-1</button><span class="sep"></span></div>
<div class="right"><span class="sep"></span><span class="count">형태 수: 14</span><span class="sep"></span>
<div class="view"><button class="layers" aria-label="레이어"><ui-icon name="layers"></ui-icon><ui-icon name="caret"></ui-icon></button><button class="focus"><ui-icon name="focus"></ui-icon>집중</button><button aria-label="재생"><ui-icon name="play"></ui-icon></button></div><span class="sep"></span>
<div class="zoom"><button aria-label="축소"><ui-icon name="minus"></ui-icon></button><input type="range" aria-label="확대/축소" min="0" max="100" value="24"><button aria-label="확대"><ui-icon name="plus"></ui-icon></button><button class="pct">100%<ui-icon name="caret"></ui-icon></button></div><span class="sep"></span>
<div class="end"><button aria-label="지도"><ui-icon name="map"></ui-icon></button><button aria-label="화면 맞춤"><ui-icon name="fitView"></ui-icon></button></div></div>`);

define('diagram-app', `
  :host{display:flex;flex-direction:column;height:100vh}
  top-bar,tool-ribbon,status-bar{flex:none}
  main{flex:1;min-height:0;display:flex}
  .center{flex:1;min-width:0;display:flex;flex-direction:column}`,
`<top-bar></top-bar><tool-ribbon></tool-ribbon>
<main><side-nav></side-nav><symbol-panel></symbol-panel><div class="center"><work-area></work-area><color-strip></color-strip></div><right-nav></right-nav></main>
<status-bar></status-bar>`);
</script>
</body>
</html>
